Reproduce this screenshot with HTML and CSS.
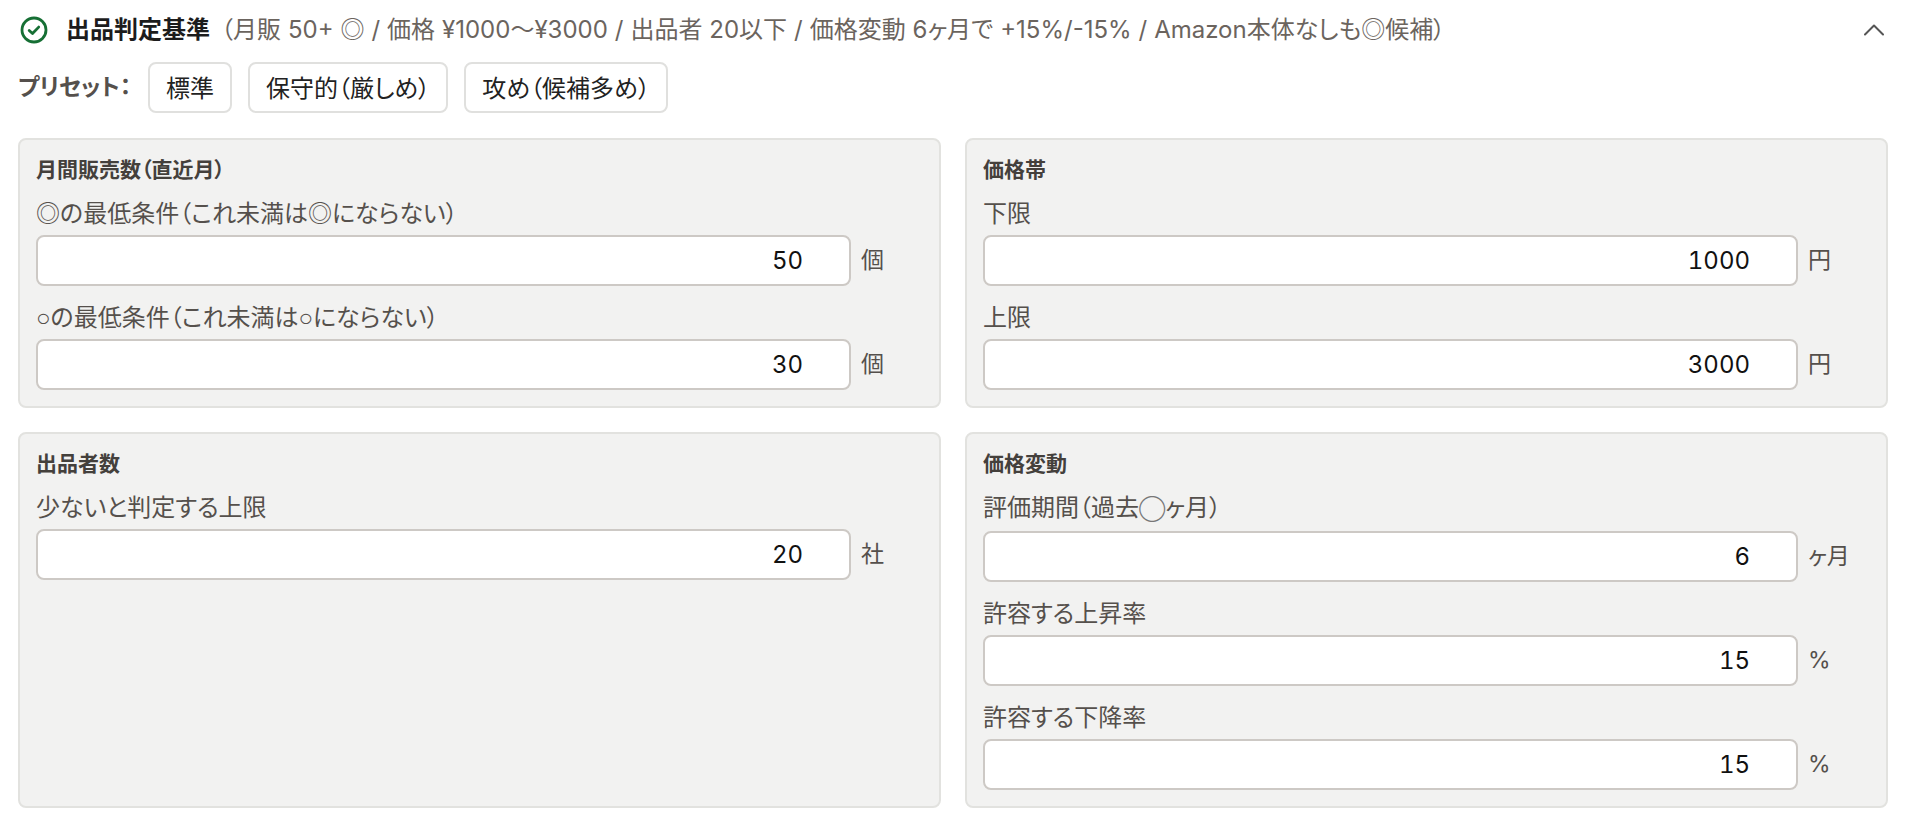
FILE: index.html
```html
<!DOCTYPE html>
<html lang="ja">
<head>
<meta charset="utf-8">
<title>出品判定基準</title>
<link rel="stylesheet" href="styles.css">
</head>
<body>
<main class="criteria">
  <header class="criteria-head">
    <svg class="icon-check" viewBox="0 0 28 28" aria-hidden="true"><circle cx="14" cy="14" r="12"/><path d="M9.2 14.4l3.3 3.1 6.2-6.4"/></svg>
    <h1 class="criteria-title">出品判定基準</h1>
    <p class="criteria-summary">（月販 50+ ◎ / 価格 ¥1000〜¥3000 / 出品者 20以下 / 価格変動 6ヶ月で +15%/-15% / Amazon本体なしも◎候補）</p>
    <svg class="icon-chevron" viewBox="0 0 20 12" aria-hidden="true"><path d="M1 10.5L10 1.5l9 9"/></svg>
  </header>
  <div class="presets">
    <span class="presets-label">プリセット：</span>
    <button class="preset" type="button">標準</button>
    <button class="preset" type="button">保守的（厳しめ）</button>
    <button class="preset" type="button">攻め（候補多め）</button>
  </div>
  <div class="panels">
    <section class="panel">
      <h2 class="panel-title">月間販売数（直近月）</h2>
      <label class="field"><span class="field-label">◎の最低条件（これ未満は◎にならない）</span>
        <span class="field-row"><input class="field-input" type="text" value="50"><span class="unit">個</span></span></label>
      <label class="field"><span class="field-label"><span class="small-ring">○</span>の最低条件（これ未満は<span class="small-ring">○</span>にならない）</span>
        <span class="field-row"><input class="field-input" type="text" value="30"><span class="unit">個</span></span></label>
    </section>
    <section class="panel">
      <h2 class="panel-title">価格帯</h2>
      <label class="field"><span class="field-label">下限</span>
        <span class="field-row"><input class="field-input" type="text" value="1000"><span class="unit">円</span></span></label>
      <label class="field"><span class="field-label">上限</span>
        <span class="field-row"><input class="field-input" type="text" value="3000"><span class="unit">円</span></span></label>
    </section>
    <section class="panel">
      <h2 class="panel-title">出品者数</h2>
      <label class="field"><span class="field-label">少ないと判定する上限</span>
        <span class="field-row"><input class="field-input" type="text" value="20"><span class="unit">社</span></span></label>
    </section>
    <section class="panel">
      <h2 class="panel-title">価格変動</h2>
      <label class="field"><span class="field-label">評価期間（過去<span class="thin-circle">◯</span>ヶ月）</span>
        <span class="field-row"><input class="field-input" type="text" value="6"><span class="unit">ヶ月</span></span></label>
      <label class="field"><span class="field-label">許容する上昇率</span>
        <span class="field-row"><input class="field-input" type="text" value="15"><span class="unit">%</span></span></label>
      <label class="field"><span class="field-label">許容する下降率</span>
        <span class="field-row"><input class="field-input" type="text" value="15"><span class="unit">%</span></span></label>
    </section>
  </div>
</main>
</body>
</html>
```
FILE: styles.css
```css
* { box-sizing: border-box; }
html, body { margin: 0; background: #fff; }
body {
  font-family: Inter, "Noto Sans CJK JP", sans-serif;
  font-feature-settings: "palt";
  color: #222;
  overflow: hidden;
}
.criteria { padding: 14px 20px 0 18px; }
.criteria-head {
  display: flex;
  align-items: center;
  height: 32px;
}
.icon-check { width: 28px; height: 28px; margin-left: 2px; flex: none; fill: none; stroke: #166f34; stroke-width: 2.8; stroke-linecap: round; stroke-linejoin: round; }
.criteria-title { margin: 0 0 0 18px; font-size: 24px; font-weight: 700; color: #1c1c1c; line-height: 32px; }
.criteria-summary { margin: 0 0 0 11px; font-size: 24px; font-weight: 400; word-spacing: 0.2px; color: #6b645e; line-height: 32px; flex: 1; white-space: nowrap; }
.icon-chevron { width: 20px; height: 12px; margin-right: 4px; flex: none; fill: none; stroke: #555; stroke-width: 2; stroke-linecap: round; stroke-linejoin: round; }
.presets {
  display: flex;
  align-items: center;
  gap: 16px;
  margin-top: 16px;
}
.presets-label { font-size: 23px; line-height: 46px; margin-bottom: 1px; font-weight: 700; color: #55504c; width: 114px; }
.preset {
  height: 51px;
  padding: 0 16px 3px;
  font: inherit;
  font-size: 24px;
  color: #222;
  background: #fff;
  border: 2px solid #e0e0de;
  border-radius: 8px;
}
.panels {
  display: grid;
  grid-template-columns: 1fr 1fr;
  gap: 24px;
  margin-top: 25px;
}
.panel {
  padding: 18px 16px 16px;
  background: #f2f2f1;
  border: 2px solid #e2e2df;
  border-radius: 8px;
  display: flex;
  flex-direction: column;
  gap: 16px;
}
.panel-title { margin: 0; font-size: 21px; line-height: 24px; font-weight: 700; color: #44403c; }
.field { display: flex; flex-direction: column; gap: 5px; }
.field-label { font-size: 24px; line-height: 32px; color: #55504c; }
.small-ring { font-family: "Liberation Sans", sans-serif; }
.thin-circle { font-size: 19px; font-weight: 300; color: #777; }
.field-row { display: flex; align-items: center; gap: 10px; }
.field-input {
  flex: 1;
  min-width: 0;
  height: 51px;
  padding: 0 46px 0 16px;
  font: inherit;
  font-size: 24px;
  font-feature-settings: "tnum";
  text-align: right;
  color: #111;
  background: #fff;
  border: 2px solid #cdc9c5;
  border-radius: 8px;
  outline: none;
}
.unit { width: 62px; flex: none; font-size: 23px; line-height: 32px; margin-top: -2px; color: #55504c; }
```
